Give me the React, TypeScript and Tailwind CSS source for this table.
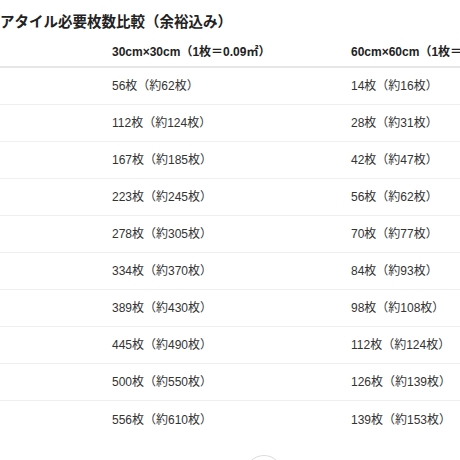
const rows = [
  { area: "5㎡", small: "56枚（約62枚）", large: "14枚（約16枚）" },
  { area: "10㎡", small: "112枚（約124枚）", large: "28枚（約31枚）" },
  { area: "15㎡", small: "167枚（約185枚）", large: "42枚（約47枚）" },
  { area: "20㎡", small: "223枚（約245枚）", large: "56枚（約62枚）" },
  { area: "25㎡", small: "278枚（約305枚）", large: "70枚（約77枚）" },
  { area: "30㎡", small: "334枚（約370枚）", large: "84枚（約93枚）" },
  { area: "35㎡", small: "389枚（約430枚）", large: "98枚（約108枚）" },
  { area: "40㎡", small: "445枚（約490枚）", large: "112枚（約124枚）" },
  { area: "45㎡", small: "500枚（約550枚）", large: "126枚（約139枚）" },
  { area: "50㎡", small: "556枚（約610枚）", large: "139枚（約153枚）" },
];

const App = () => {
  return (
    <div className="w-[460px] h-[460px] overflow-hidden bg-white font-['Liberation_Sans','Noto_Sans_CJK_JP',sans-serif]">
      <div className="-ml-[33px] w-[800px] pt-[10px]">
        <h2 className="ml-[4px] text-[14.5px] leading-[24px] font-bold text-[#222]">
          フロアタイル必要枚数比較（余裕込み）
        </h2>

        <div className="mt-[3px]">
          {/* header */}
          <div className="grid grid-cols-[145px_239px_239px] h-[31px] items-center border-b-2 border-[#e6e6e6] text-[12px] font-bold text-[#222]">
            <div>面積</div>
            <div>30cm×30cm（1枚＝0.09㎡）</div>
            <div>60cm×60cm（1枚＝0.36㎡）</div>
          </div>

          {rows.map((row, i) => (
            <div
              key={row.area}
              className={
                i === rows.length - 1
                  ? "grid grid-cols-[145px_239px_239px] h-[37px] items-center text-[12px] text-[#333]"
                  : "grid grid-cols-[145px_239px_239px] h-[37px] items-center border-b border-[#efefef] text-[12px] text-[#333]"
              }
            >
              <div>{row.area}</div>
              <div>{row.small}</div>
              <div>{row.large}</div>
            </div>
          ))}
        </div>

        <div className="mt-[17px] ml-[278px] w-[38px] h-[38px] rounded-full border border-[#dcdcdc]"></div>
      </div>
    </div>
  );
};

export default App;
